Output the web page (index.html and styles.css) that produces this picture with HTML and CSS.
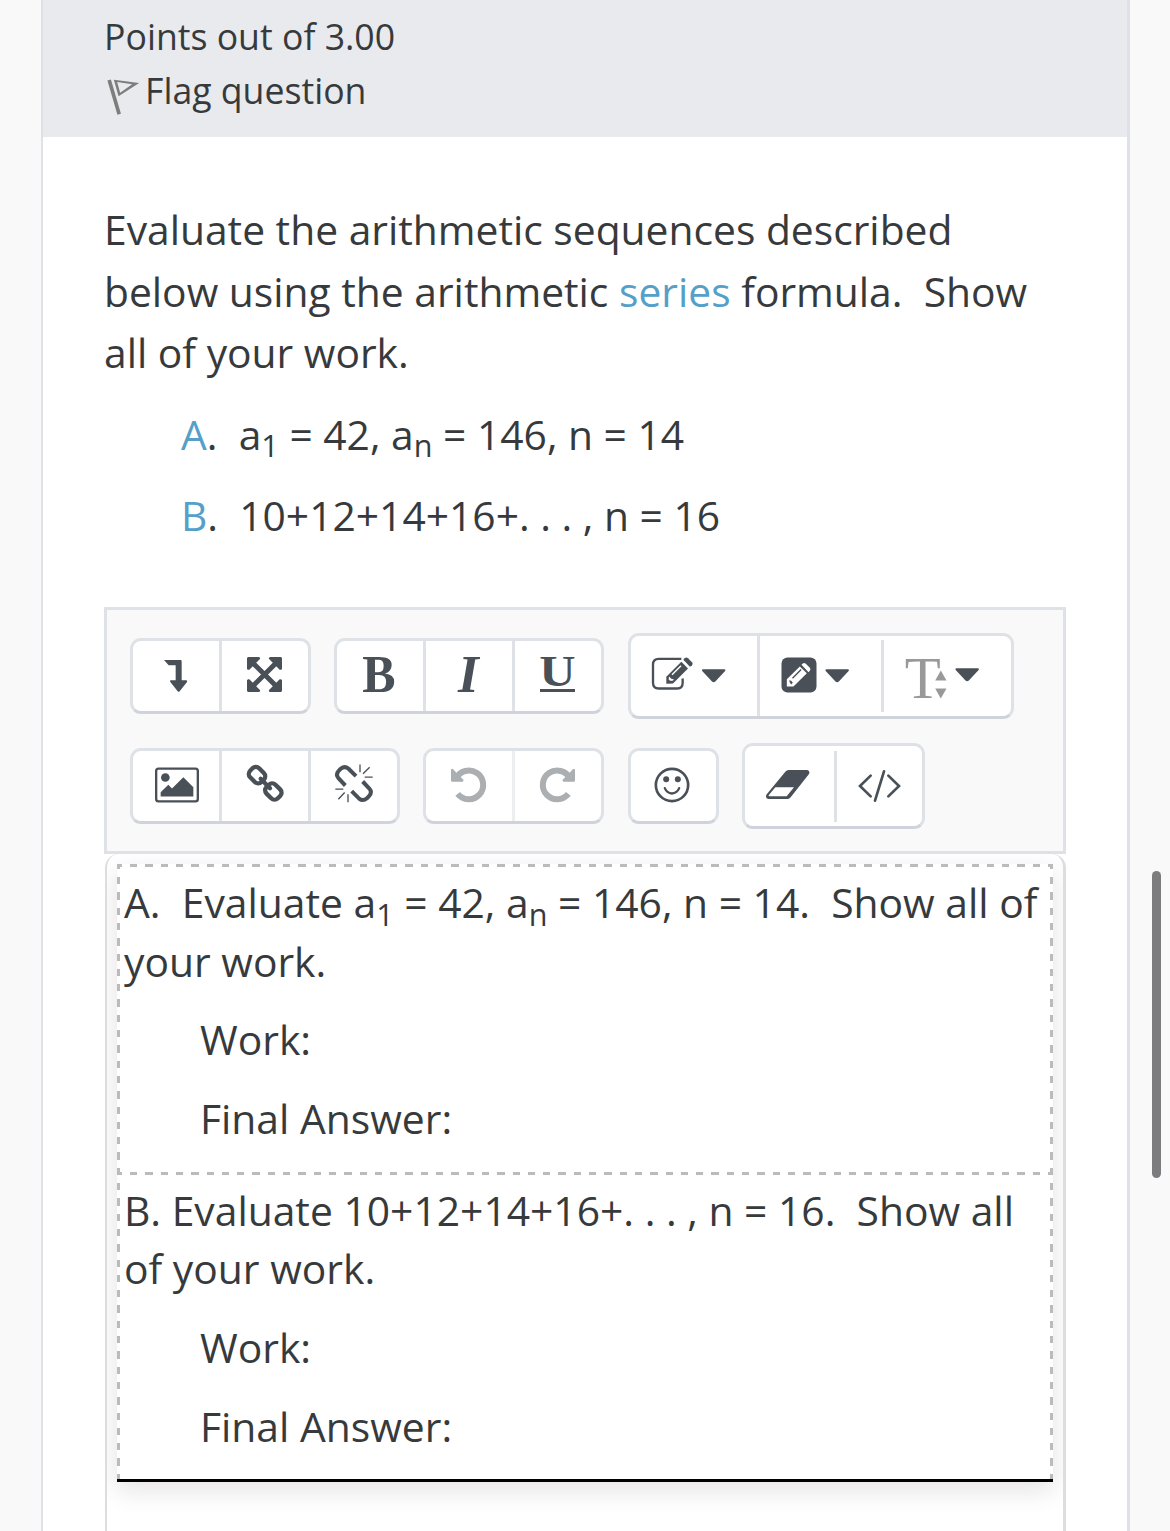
FILE: index.html
```
<!DOCTYPE html>
<html lang="en">

<head>
	<meta charset="utf-8">
	<title>Quiz question</title>
	<link rel="stylesheet" href="styles.css">
</head>

<body>

<div class="card">

	<!-- question info -->
	<div class="info">
		<div class="infoLine">Points out of 3.00</div>
		<div class="infoLine">
			<svg class="flag" viewBox="0 0 98 108"><path d="M6 3 L36 106" stroke="#7d7d7d" stroke-width="11"/><path d="M20 2 L96 12 L34 52 Z M30 9 L39 41 L75 16 Z" fill="#7d7d7d" fill-rule="evenodd"/></svg>
			<span>Flag question</span>
		</div>
	</div>

	<!-- question text -->
	<div class="question">
		<p>Evaluate the arithmetic sequences described<br>below using the arithmetic <a>series</a> formula.&nbsp; Show<br>all of your work.</p>
		<p class="indent"><a>A</a>.&nbsp; a<sub>1</sub> = 42, a<sub>n</sub> = 146, n = 14</p>
		<p class="indent"><a>B</a>.&nbsp; 10+12+14+16+. . . , n = 16</p>
	</div>

	<div class="toolbar">
		<div class="toolRow">
			<div class="group">
				<div class="tool"><svg viewBox="162 162 132 132"><path d="M192 180H242Q245 180 245 184V241H259Q263 242 261 246L239 274Q236 277 233 274L211 246Q208 242 212 241H227V196H206Z"/></svg></div>
				<div class="tool"><svg viewBox="429 162 132 132"><path d="M458 188L529 259M529 188L458 259" class="line" stroke-width="15"/><path d="M444 171H477Q483 174 479 178L448 209Q443 211 441 206V174ZM510 171H543L546 174V206Q544 211 539 209L508 178Q504 174 510 171ZM441 273V241Q443 236 448 238L479 269Q483 273 477 276H444ZM546 273V241Q544 236 539 238L508 269Q504 273 510 276H543Z"/></svg></div>
			</div>
			<div class="group">
				<div class="tool"><svg viewBox="84 102 132 132"><text x="97" y="216" font-size="159" textLength="100" lengthAdjust="spacingAndGlyphs">B</text></svg></div>
				<div class="tool"><svg viewBox="351 102 132 132"><text x="384" y="216" font-size="159" font-style="italic">I</text></svg></div>
				<div class="tool"><svg viewBox="618 102 132 132"><text x="628" y="197" font-size="132" textLength="109" lengthAdjust="spacingAndGlyphs">U</text><path d="M630 207H735V216H630Z"/></svg></div>
			</div>
			<div class="group tall">
				<div class="tool menu1"><svg class="wide" viewBox="96 100.5 252 132"><path d="M184 115H116Q99 115 99 132V187Q99 204 116 204H172Q188 204 188 187V174" class="line" stroke-width="7"/><path d="M139 190V169L184 124L204 144L159 189Z"/><path d="M190 118L194 113Q199 109 204 113L216 125Q220 130 216 134L210 139Z"/><path d="M156 163L183 136" stroke="#fff" stroke-width="4"/><path d="M147 168L154 175L162 177L158 181H150L146 176Z" fill="#fff"/><path d="M249 146H313Q319 147 314 153L286 183Q281 188 276 183L248 153Q243 147 249 146Z"/></svg></div>
				<div class="tool menu2"><svg class="wide" viewBox="475.5 100.5 252 132"><rect x="486" y="111" width="105" height="105" rx="18"/><path d="M502 198V176L541 138L562 158L522 198Z M546 133L550 129Q554 126 559 130L571 142Q575 147 571 151L567 155Z" fill="#fff"/><path d="M519 173L545 147" class="line" stroke-width="4"/><path d="M509 179L515 181L520 187L515 192L511 186Z"/><path d="M621 146H685Q691 147 686 153L658 183Q653 188 648 183L620 153Q615 147 621 146Z"/></svg></div>
				<div class="tool menu3"><svg class="wide" viewBox="286.5 100.5 252 132"><g fill="#999"><text x="286" y="236" font-size="177" class="thin" textLength="108" lengthAdjust="spacingAndGlyphs">T</text><path d="M394 143L420 190H368Z" fill="#fff"/><path d="M394 153L411 183H377ZM377 207H411L394 237Z"/></g><path d="M441 146H505Q511 147 506 153L478 183Q473 188 468 183L440 153Q435 147 441 146Z"/></svg></div>
			</div>
		</div>
		<div class="toolRow">
			<div class="group">
				<div class="tool"><svg viewBox="162 490.5 132 132"><rect x="168.500" y="504.500" width="125" height="98" rx="7" class="line" stroke-width="7"/><circle cx="196" cy="531" r="13"/><path d="M182 588V575L205 553L216 564L250 530L280 560V588Z"/></svg></div>
				<div class="tool"><svg viewBox="429 490.5 132 132"><g class="line" stroke-width="13"><rect x="447" y="505" width="48" height="38" rx="14" transform="rotate(45 471 524)"/><rect x="496" y="554" width="48" height="38" rx="14" transform="rotate(45 520 573)"/><path d="M482 535L510 563" stroke-linecap="round"/></g></svg></div>
				<div class="tool"><svg viewBox="6 430.5 132 132"><g class="line"><path d="M78 467L55 444Q44 435 32 445L26 451Q16 462 26 474L46 495M65 512L88 535Q99 543 111 533L117 527Q128 515 118 504L98 483" stroke-width="12"/><path d="M90 432V455M99 460L119 440M104 470H128M16 506H40M25 536L44 516M54 521V545" stroke-width="4"/></g></svg></div>
			</div>
			<div class="group off">
				<div class="tool"><svg viewBox="351 430.5 132 132"><path d="M378 474A43 43 0 1 1 383 520" class="line" stroke-width="18"/><path d="M363 448Q365 443 369 446L400 478Q402 481 398 484H366Q363 484 363 480Z"/></svg></div>
				<div class="tool"><svg viewBox="618 430.5 132 132"><path d="M720 474A43 43 0 1 0 715 520" class="line" stroke-width="18"/><path d="M735 448Q733 443 729 446L698 478Q696 481 700 484H732Q735 484 735 480Z"/></svg></div>
			</div>
			<div class="group">
				<div class="tool single"><svg viewBox="94.5 430.5 132 132"><circle cx="157.500" cy="493.500" r="48.500" class="line" stroke-width="8"/><circle cx="140" cy="476" r="9"/><circle cx="175" cy="476" r="9"/><path d="M136 503Q142 518 157 519Q173 518 179 503" class="line" stroke-width="7" stroke-linecap="round"/></svg></div>
			</div>
			<div class="group tall">
				<div class="tool erase"><svg viewBox="445 432 132 132"><path d="M510 450H566Q575 453 571 462L516 532Q512 537 507 537H448Q439 533 443 524L500 455Q504 450 510 450ZM470 502L450 526Q449 529 453 529H504L526 502Z" fill-rule="evenodd"/></svg></div>
				<div class="tool code"><svg viewBox="145 431 132 132"><path d="M186 466L154 497L186 528M239 466L271 497L239 528M226 453L199 541" class="line" stroke-width="8" stroke-linecap="round"/></svg></div>
			</div>
		</div>
	</div>

	<div class="editor">
		<div class="answers">
			<div class="answer">
				<p>A.&nbsp; Evaluate a<sub>1</sub> = 42, a<sub>n</sub> = 146, n = 14.&nbsp; Show all of<br>your work.</p>
				<p class="indent">Work:</p>
				<p class="indent">Final Answer:</p>
			</div>
			<div class="answer">
				<p>B. Evaluate 10+12+14+16+. . . , n = 16.&nbsp; Show all<br>of your work.</p>
				<p class="indent">Work:</p>
				<p class="indent">Final Answer:</p>
			</div>
		</div>
	</div>

</div>

<!-- page scroll thumb, floats over the right margin -->
<div class="thumb"></div>

</body>
</html>
```
FILE: styles.css
```
*
{
	box-sizing: border-box;
}

body
{
	margin: 0;
	height: 1531px;
	overflow: hidden;
	background: #f9f9f9;
	color: #373a3c;
	font-family: "Open Sans", sans-serif;
}

p
{
	margin: 0;
	white-space: nowrap;
}

a
{
	color: #559fc9;
}

sub
{
	font-size: 75%;
	line-height: 0;
	position: relative;
	bottom: -0.25em;
	vertical-align: baseline;
}

.card
{
	width: 1089px;
	height: 1531px;
	margin-left: 41px;
	border: solid #dee2e6;
	border-width: 0 3px 0 2px;
	background: #fff;
}

.info
{
	height: 137px;
	padding: 9px 0 0 61px;
	background: #e9eaee;
	font-size: 35.65px;
	line-height: 54px;
}

.infoLine
{
	display: flex;
}

.flag
{
	width: 33px;
	height: 36px;
	margin: 16px 5px 0 3px;
}

.question
{
	height: 470px;
	padding: 62px 0 0 61px;
	font-size: 40.77px;
	line-height: 61.5px;
}

.question .indent
{
	padding-left: 77px;
	margin-top: 20px;
}

/* editor toolbar */

.toolbar
{
	display: flex;
	flex-direction: column;
	justify-content: center;
	gap: 24px;
	width: 962px;
	height: 247px;
	margin-left: 61px;
	padding-left: 23px;
	border: 3px solid #dee2e6;
	background: #f9f9f9;
}

.toolRow
{
	display: flex;
	align-items: center;
	gap: 23.3px;
}

.group
{
	display: flex;
	height: 76px;
	border: 3px solid #dee2e6;
	border-bottom-color: #d0d3db;
	border-radius: 11px;
	background: #fff;
}

.tall
{
	height: 86px;
}

.tool
{
	display: flex;
	align-items: center;
	justify-content: center;
	width: 86px;
}

.tool + .tool
{
	width: 89px;
	border-left: 3px solid #dee2e6;
}

.off .tool + .tool
{
	border-color: #eceef0;
}

.single
{
	width: 85px;
}

.group .menu1
{
	width: 126px;
}

.group .menu2
{
	width: 124px;
}

.group .menu3
{
	width: 130px;
	margin: 4px 0;
}

.group .erase
{
	width: 89px;
}

.group .code
{
	width: 88px;
	margin: 5px 0 4px;
}

.tool svg
{
	flex: none;
	width: 44px;
	height: 44px;
	overflow: visible;
	fill: #495057;
	font-family: "Liberation Serif", serif;
	font-weight: bold;
}

.tool svg.wide
{
	width: 84px;
}

.tool .line
{
	fill: none;
	stroke: #495057;
}

.tool .thin
{
	font-weight: normal;
}

.tool.menu3 svg
{
	margin-top: -1px;
}

.off .tool svg
{
	fill: #abafb2;
}

.off .tool .line
{
	stroke: #abafb2;
}

/* answer area */

.editor
{
	width: 961px;
	height: 720px;
	margin-left: 62px;
	padding: 10px 10px 0;
	overflow: hidden;
	border: solid #ddd;
	border-width: 0 3px 0 2px;
	border-radius: 14px 14px 0 0;
	background: #fff;
}

.answers
{
	width: 936px;
	height: 618px;
	border-bottom: 3px solid #000;
	background:
		repeating-linear-gradient(to bottom, #bbb 0 5px, transparent 5px 13px, #bbb 13px 15.3px) left / 3px 100% no-repeat,
		repeating-linear-gradient(to bottom, #bbb 0 5px, transparent 5px 13px, #bbb 13px 15.3px) right / 3px 100% no-repeat,
		#fff;
	box-shadow: 0 8px 24px rgba(40, 20, 30, 0.12);
	font-size: 40.8px;
	line-height: 58.5px;
}

.answer
{
	height: 307.5px;
	padding: 9px 0 0 7px;
	background: repeating-linear-gradient(to right, #bbb 0 5px, transparent 5px 13px, #bbb 13px 15.3px) top / 100% 3px no-repeat;
}

.answer .indent
{
	padding-left: 76px;
	margin-top: 20.3px;
}

.thumb
{
	position: fixed;
	top: 871px;
	left: 1152px;
	width: 9px;
	height: 307px;
	border-radius: 5px;
	background: #7c7c7e;
}
```
